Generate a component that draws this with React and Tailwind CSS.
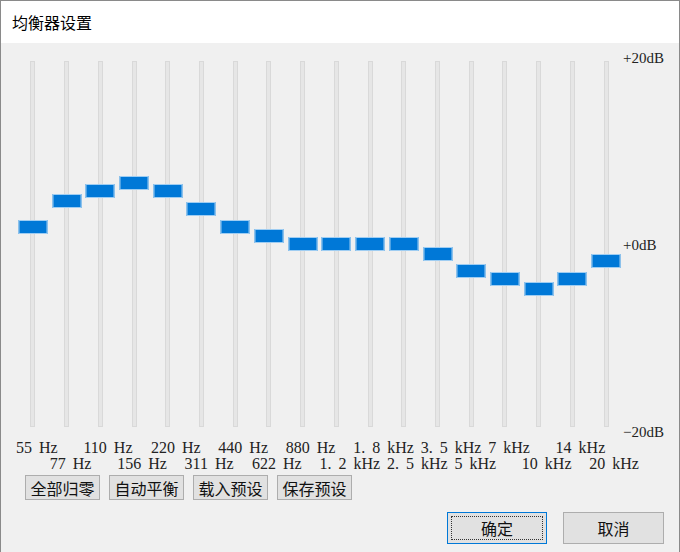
import React from 'react';

// Equalizer bands: label and thumb centre (px from the top of the track)
const bands = [
  { label: '55 Hz', y: 165 },
  { label: '77 Hz', y: 139 },
  { label: '110 Hz', y: 129 },
  { label: '156 Hz', y: 121 },
  { label: '220 Hz', y: 129 },
  { label: '311 Hz', y: 147 },
  { label: '440 Hz', y: 165 },
  { label: '622 Hz', y: 174 },
  { label: '880 Hz', y: 182 },
  { label: '1. 2 kHz', y: 182 },
  { label: '1. 8 kHz', y: 182 },
  { label: '2. 5 kHz', y: 182 },
  { label: '3. 5 kHz', y: 192 },
  { label: '5 kHz', y: 209 },
  { label: '7 kHz', y: 217 },
  { label: '10 kHz', y: 227 },
  { label: '14 kHz', y: 217 },
  { label: '20 kHz', y: 199 },
];

const cjk = '[font-family:"Noto_Sans_CJK_SC",sans-serif]';
const serif = '[font-family:"Liberation_Serif","Noto_Sans_CJK_SC",serif]';

const Slider = ({ y }) => (
  <div className="flex justify-center">
    <div className="relative w-[5px] h-[366px] bg-[#e6e6e6] border border-[#d9d9d9]">
      <div
        className="absolute left-1/2 -translate-x-1/2 w-[29px] h-[14px] bg-[#0078d7] border border-[#9fcdf2]"
        style={{ top: y - 7 }}
      />
    </div>
  </div>
);

const ToolButton = ({ children }) => (
  <button className={`w-[75px] h-[25px] bg-[#e1e1e1] border border-[#adadad] text-[16px] leading-none text-[#111] ${cjk}`}>
    {children}
  </button>
);

export default function App() {
  return (
    <div className="w-[680px] h-[552px] flex flex-col border-x border-t border-[#8a8a8a] bg-[#f0f0f0] overflow-hidden">
      {/* title bar */}
      <div className={`h-[42px] shrink-0 bg-white flex items-center px-[11px] text-[16px] text-black ${cjk}`}>
        均衡器设置
      </div>

      <div className="flex-1 flex flex-col px-[15px]">
        <div className="flex">
          <div className="w-[608px]">
            <div className="grid grid-cols-[repeat(18,minmax(0,1fr))] pt-[18px]">
              {bands.map((b, i) => (
                <Slider key={i} y={b.y} />
              ))}
            </div>
            <div className={`grid grid-cols-[repeat(18,minmax(0,1fr))] mt-[13px] text-[16px] leading-[16px] [word-spacing:3px] text-[#222] ${serif}`}>
              {bands.map((b, i) => (
                <div key={i} className="flex flex-col h-[32px] whitespace-nowrap">
                  {i % 2 === 1 && <span className="h-[16px]" />}
                  <span>{b.label}</span>
                </div>
              ))}
            </div>
          </div>
          {/* dB scale */}
          <div className={`flex flex-col justify-between h-[392px] mt-[6px] text-[15px] leading-[18px] text-[#222] ${serif}`}>
            <span>+20dB</span>
            <span>+0dB</span>
            <span>−20dB</span>
          </div>
        </div>

        <div className="flex gap-[9px] mt-[3px] pl-[9px]">
          <ToolButton>全部归零</ToolButton>
          <ToolButton>自动平衡</ToolButton>
          <ToolButton>载入预设</ToolButton>
          <ToolButton>保存预设</ToolButton>
        </div>

        <div className="flex justify-end gap-[16px] mt-[12px]">
          <button className={`w-[100px] h-[32px] bg-[#e1e1e1] border border-[#0078d7] outline-1 outline-dotted outline-[#333] outline-offset-[-5px] text-[16px] text-[#111] ${cjk}`}>
            确定
          </button>
          <button className={`w-[101px] h-[32px] bg-[#e1e1e1] border border-[#adadad] text-[16px] text-[#111] ${cjk}`}>
            取消
          </button>
        </div>
      </div>
    </div>
  );
}
